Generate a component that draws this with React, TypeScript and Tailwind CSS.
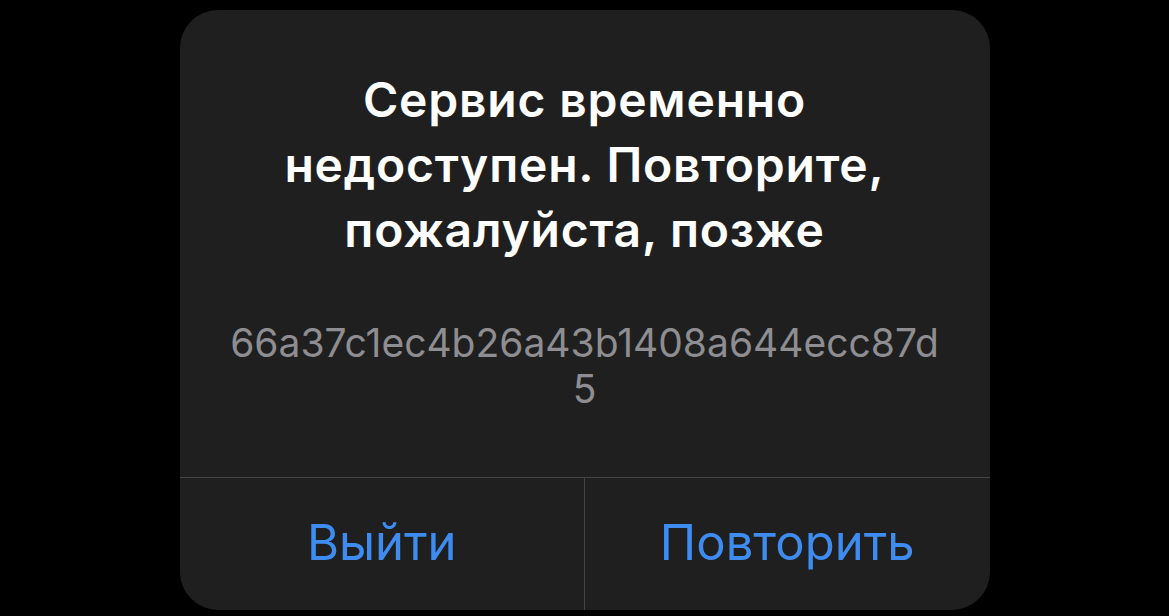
export default function App() {
  return (
    <div className="w-[1169px] h-[616px] bg-black flex items-start justify-center pt-[10px]" style={{ fontFamily: 'Inter, "Noto Sans", sans-serif' }}>
      <div className="w-[810px] h-[600px] bg-[#1f1f1f] rounded-[38px] flex flex-col overflow-hidden">
        <div className="h-[467px] flex flex-col items-center pt-[57px]">
          <div className="text-white font-semibold text-[48px] leading-[65px] text-center tracking-[0.8px]">
            Сервис временно
            <br />
            недоступен. Повторите,
            <br />
            пожалуйста, позже
          </div>
          <div className="mt-[58px] text-[#8e8e92] text-[39px] leading-[46px] text-center">
            66a37c1ec4b26a43b1408a644ecc87d
            <br />
            5
          </div>
        </div>
        <div className="flex-1 flex border-t border-[#454545]">
          <button className="flex-1 flex items-center justify-center text-[#3f8cf0] text-[49px] pb-[2px]">Выйти</button>
          <div className="w-px bg-[#454545]" />
          <button className="flex-1 flex items-center justify-center text-[#3f8cf0] text-[49px] pb-[2px]">Повторить</button>
        </div>
      </div>
    </div>
  );
}
